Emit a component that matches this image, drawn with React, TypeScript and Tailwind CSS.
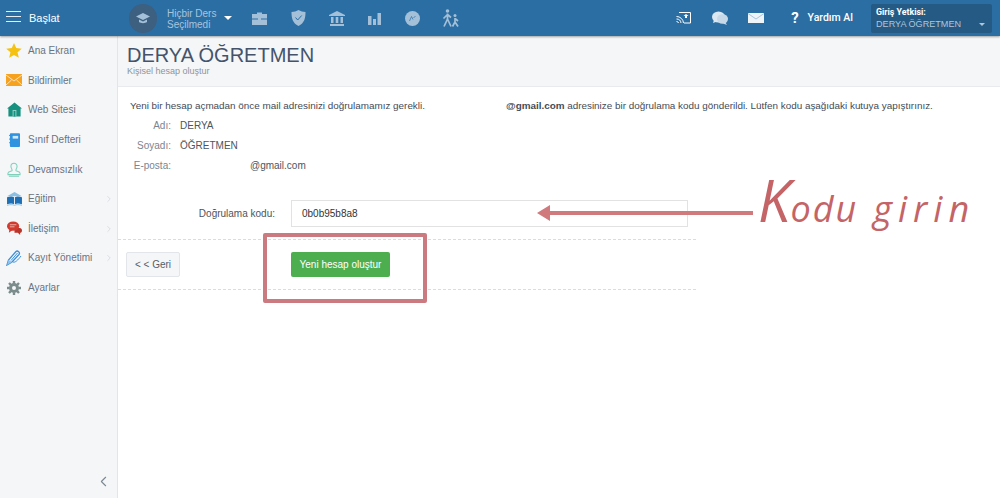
import React from "react";
import { ChevronRight, ChevronLeft } from "lucide-react";

const Star = () => (
  <svg width="16" height="15" viewBox="0 0 18 17"><path d="M9 0l2.500 5.800 6.300.6-4.800 4.200 1.500 6.200L9 13.500l-5.500 3.300L5 10.600.2 6.400l6.300-.6z" fill="#f5c211" /></svg>
);
const Mail = () => (
  <svg width="16" height="12" viewBox="0 0 16 12"><rect width="16" height="12" fill="#f7a21f" /><path d="M0 1l8 6 8-6M0 11l5.500-5M16 11l-5.500-5" stroke="#fff" strokeWidth=".7" fill="none" /></svg>
);
const Home = () => (
  <svg width="15" height="15" viewBox="0 0 16 15"><path d="M8 0l8 6.500h-1.500V15h-13V6.500H0z" fill="#16907f" /><rect x="6" y="8" width="4" height="7" fill="#9ed3ca" /><rect x="7" y="9" width="2" height="6" fill="#16907f" /></svg>
);
const NoteBook = () => (
  <svg width="11" height="14" viewBox="0 0 12 15"><rect x="1" width="11" height="15" rx="1" fill="#2f93df" /><rect x="0" y="2" width="2" height="1" fill="#2f93df" /><rect x="0" y="6" width="2" height="1" fill="#2f93df" /><rect x="0" y="10" width="2" height="1" fill="#2f93df" /><rect x="4" y="3" width="6" height="3" fill="#cfe8fb" /></svg>
);
const Stamp = () => (
  <svg width="14" height="15" viewBox="0 0 15 16" fill="none" stroke="#7fd0bb" strokeWidth="1.100"><path d="M5.500 9c0-1.500-1.300-2.500-1.300-4.500a3.300 3.300 0 016.600 0C10.800 6.500 9.500 7.500 9.500 9c0 1 4.500 1 4.500 3v1.500H1V12c0-2 4.500-2 4.500-3zM2 15.300h11" /></svg>
);
const Book = () => (
  <svg width="15" height="14" viewBox="0 0 16 15"><path d="M8 0l8 4.500H0z" fill="#8bbfe3" /><path d="M0 5.500c3-1 6-1 7.500 0V13C6 12 3 12 0 13zM16 5.500c-3-1-6-1-7.500 0V13c1.500-1 4.500-1 7.500 0z" fill="#1f6fb5" /><path d="M0 14.300c3-1 6-1 8 0 2-1 5-1 8 0" stroke="#8bbfe3" fill="none" /></svg>
);
const Chat = () => (
  <svg width="15" height="15" viewBox="0 0 16 15"><path d="M10 7h3.500c1.500 0 2.500 1 2.500 2.500S15 12 14 12v2.500L11.500 12H8V8z" fill="#b8352a" /><ellipse cx="6.500" cy="5" rx="6.500" ry="5" fill="#d13a2f" /><path d="M2.500 8l-.5 4 4-3z" fill="#d13a2f" /><path d="M3 3.500h7M3 5.700h5" stroke="#f3b5ae" /></svg>
);
const Pen = () => (
  <svg width="16" height="16" viewBox="0 0 16 16" fill="none"><path d="M1 15l1.500-5L10 1.500c1.500-1.500 4.500 1 3 3L6 12z" stroke="#3d8fd8" strokeWidth="1.300" /><path d="M5 10.500L11.500 3M7 12c2 1 5-2 8-6" stroke="#3d8fd8" /><path d="M1 15l1.500-5L6 12z" fill="#8cc2ee" /></svg>
);
const Gear = () => (
  <svg width="14" height="14" viewBox="0 0 14 14"><circle cx="7" cy="7" r="3.500" fill="none" stroke="#7b8c8c" strokeWidth="3" /><g stroke="#7b8c8c" strokeWidth="2.400"><path d="M7 0v2.500M7 11.500V14M0 7h2.500M11.500 7H14M2 2l1.800 1.800M10.200 10.200L12 12M12 2l-1.800 1.800M3.800 10.200L2 12" /></g></svg>
);

const items: { label: string; icon: React.ReactNode; arrow?: boolean }[] = [
  { label: "Ana Ekran", icon: <Star /> },
  { label: "Bildirimler", icon: <Mail /> },
  { label: "Web Sitesi", icon: <Home /> },
  { label: "Sınıf Defteri", icon: <NoteBook /> },
  { label: "Devamsızlık", icon: <Stamp /> },
  { label: "Eğitim", icon: <Book />, arrow: true },
  { label: "İletişim", icon: <Chat />, arrow: true },
  { label: "Kayıt Yönetimi", icon: <Pen />, arrow: true },
  { label: "Ayarlar", icon: <Gear /> },
];

const c = "#a3c0d8";

export default function App() {
  return (
    <div className="relative flex h-[498px] w-full flex-col overflow-hidden bg-white font-['Liberation_Sans',Arial,sans-serif]">
      <header className="z-10 flex h-9 shrink-0 items-center bg-[#2b6ea4] text-white shadow-[0_1px_2px_rgba(0,0,0,0.35)]">
        <div className="ml-[6px] -mt-[3px] flex w-[15px] flex-col gap-[3.500px]">
          <span className="h-[1.500px] bg-[#e6eef5]" /><span className="h-[1.500px] bg-[#e6eef5]" /><span className="h-[1.500px] bg-[#e6eef5]" />
        </div>
        <span className="ml-[8px] w-[100px] text-[11px]">Başlat</span>
        <div className="flex h-[29px] w-[28px] items-center justify-center rounded-full bg-[#3d5f80]">
          <svg width="14" height="11" viewBox="0 0 14 11"><path d="M7 0l7 3.500L7 7 0 3.500z" fill={c} /><path d="M3 6.500V9c2 1.500 6 1.500 8 0V6.500L7 8.500z" fill={c} /></svg>
        </div>
        <div className="ml-[10px] mt-[1px] w-[57px] text-[10px] leading-[11px] text-[#a8c4dc]">Hiçbir Ders<br />Seçilmedi</div>
        <span className="h-0 w-0 border-x-[4px] border-t-[4px] border-x-transparent border-t-white" />
        <div className="ml-[20px] flex items-center">
          <svg className="w-[15px]" height="13" viewBox="0 0 15 13"><path d="M5 2V.500h5V2h5v4.500H0V2zM0 7.500h15V13H0z" fill={c} /><rect x="6" y="6" width="3" height="2.500" fill={c} /></svg>
          <svg className="ml-[24px] w-[15px]" height="16" viewBox="0 0 15 16"><path d="M7.500 0c2 1.300 4.500 2 7 2 0 6-1 11-7 14C1.500 13 .5 8 .5 2c2.500 0 5-.7 7-2z" fill={c} /><path d="M4.500 7.500l2.200 2.500 4-4.500" stroke="#2b6ea4" fill="none" /></svg>
          <svg className="ml-[23px] w-[16px]" height="15" viewBox="0 0 16 15"><path d="M8 0l8 4v1H0V4zM2 6h2.500v6H2zM6.700 6h2.600v6H6.700zM11.500 6H14v6h-2.500zM1 13h14v2H1z" fill={c} /></svg>
          <svg className="ml-[23px] w-[13px]" height="13" viewBox="0 0 13 13"><path d="M0 4h3.500v9H0zM5 7h3v6H5zM9.500 1H13v12H9.500z" fill={c} /></svg>
          <svg className="ml-[24px] w-[15px]" height="15" viewBox="0 0 15 15"><circle cx="7.500" cy="7.500" r="7.500" fill={c} /><path d="M4.500 10l2-4.500 1.500 3M8.500 6.500l2-1" stroke="#2b6ea4" strokeWidth=".7" fill="none" /></svg>
          <svg className="ml-[22px] w-[17px]" height="18" viewBox="0 0 17 18" fill="none" stroke={c} strokeWidth="1.700"><circle cx="5.500" cy="2" r="1.800" fill={c} stroke="none" /><circle cx="13" cy="6.500" r="1.500" fill={c} stroke="none" /><path d="M5.500 4.500V10L2 17.500M5.500 10L9 17.500M5.500 5.500L1.500 9.500M5.500 5.500L9 8.500M13 9v4l-2.500 4.500M13 13l3 4.500M13 9.500l3 2.500" /></svg>
        </div>
        <div className="ml-auto flex items-center">
          <svg width="15" height="12" viewBox="0 0 15 12" fill="none" stroke="#fff"><path d="M3 .500h11.500v10.500H8" /><path d="M.5 4.500a7 7 0 017 6.500M.5 7a4.500 4.500 0 014.500 4M.5 9.500a2 2 0 012 1.500" /><path d="M10 2l-2.500 2h1.500v2h2V4h1.500z" fill="#fff" stroke="none" /></svg>
          <svg className="ml-[21px]" width="16" height="15" viewBox="0 0 16 15"><ellipse cx="6.500" cy="6" rx="6.500" ry="5.500" fill="#dbe8f2" /><path d="M2 9l-1 3 4-1.500z" fill="#dbe8f2" /><ellipse cx="10.500" cy="8" rx="5.500" ry="4.800" fill="#c7d9e8" /><path d="M13 11l2 3-4-1.500z" fill="#c7d9e8" /></svg>
          <svg className="ml-[20px]" width="16" height="10" viewBox="0 0 16 10"><rect width="16" height="10" fill="#eef4f8" /><path d="M0 .5l8 5.500 8-5.500" stroke="#8db2ce" strokeWidth=".7" fill="none" /></svg>
          <span className="ml-[27px] font-['Roboto',sans-serif] text-[15px] font-bold">?</span>
          <span className="ml-[9px] font-['Roboto',sans-serif] text-[10.500px] font-medium">Yardım Al</span>
          <div className="relative ml-[18px] mr-2 h-[29px] w-[121px] rounded-[2px] bg-[#255a84] pl-[5px] pt-[3px]">
            <div className="font-['Roboto',sans-serif] text-[8.800px] font-bold leading-[11px]">Giriş Yetkisi:</div>
            <div className="text-[9.100px] leading-[12px] text-[#aec6dc]">DERYA ÖĞRETMEN</div>
            <span className="absolute bottom-[7px] right-[7px] h-0 w-0 border-x-[3.500px] border-t-[3.500px] border-x-transparent border-t-[#aec6dc]" />
          </div>
        </div>
      </header>

      <div className="flex min-h-0 flex-1">
        <aside className="relative w-[118px] shrink-0 border-r border-[#e3e5e8] bg-[#f5f6f8]">
          {items.map((it) => (
            <div key={it.label} className="relative flex h-[29.600px] items-center text-[10px] text-[#6a7380]">
              <span className="flex w-[28px] shrink-0 justify-center">{it.icon}</span>
              <span>{it.label}</span>
              {it.arrow && <ChevronRight className="absolute left-[104px] top-[9px] h-[12px] w-[10px] text-[#c9ced3]" strokeWidth={1.500} />}
            </div>
          ))}
          <ChevronLeft className="absolute bottom-[8px] right-[5px] h-[17px] w-[17px] text-[#7d8791]" strokeWidth={1.500} />
        </aside>

        <main className="min-w-0 flex-1">
          <div className="h-[51px] border-b border-[#e8eaed] bg-[#f5f6f8] pl-[9px] pt-[8px]">
            <h1 className="text-[20px] leading-[22px] text-[#44536a]">DERYA ÖĞRETMEN</h1>
            <p className="text-[9px] leading-[10px] text-[#8b95a1]">Kişisel hesap oluştur</p>
          </div>

          <div className="w-[578px]">
            <div className="flex whitespace-nowrap pl-[12px] pt-[12px] text-[9.900px] leading-[13px] text-[#444b55]">
              <span className="w-[376px] shrink-0">Yeni bir hesap açmadan önce mail adresinizi doğrulamamız gerekli.</span>
              <span><b>@gmail.com</b> adresinize bir doğrulama kodu gönderildi. Lütfen kodu aşağıdaki kutuya yapıştırınız.</span>
            </div>

            <div className="mt-[4px] text-[10px]">
              {[["Adı:", "DERYA"], ["Soyadı:", "ÖĞRETMEN"]].map(([k, v]) => (
                <div key={k} className="flex h-[19.700px] items-center">
                  <span className="w-[53px] shrink-0 text-right text-[#7c858f]">{k}</span>
                  <span className="ml-[9px] text-[#4c5560]">{v}</span>
                </div>
              ))}
              <div className="flex h-[19.700px] items-center">
                <span className="w-[53px] shrink-0 text-right text-[#7c858f]">E-posta:</span>
                <span className="ml-[79px] text-[#4c5560]">@gmail.com</span>
              </div>
            </div>

            <div className="mt-[25px] flex items-center">
              <span className="w-[157px] shrink-0 text-right text-[10px] text-[#4c5560]">Doğrulama kodu:</span>
              <input readOnly value="0b0b95b8a8" className="ml-[16px] h-[27px] w-[397px] border border-[#e2e2e2] pl-[10px] text-[10px] text-[#333] outline-none" />
            </div>

            <div className="mt-[12px] flex h-[51px] items-center border-y border-dashed border-[#dcdcdc] pl-[8px]">
              <button className="h-[25px] w-[54px] rounded-[2px] border border-[#e2e5e9] bg-[#f5f6f8] text-[10px] text-[#555e69]">&lt; &lt; Geri</button>
              <button className="ml-[111px] h-[25px] w-[99px] rounded-[2px] bg-[#4cae4f] text-[10px] text-white">Yeni hesap oluştur</button>
            </div>
          </div>
        </main>
      </div>

      <div className="absolute left-[263px] top-[233px] h-[70px] w-[164px] rounded-[2px] border-[4px] border-[#cb7a7f]" />
      <div className="absolute left-[549px] top-[211px] h-[4px] w-[204px] bg-[#d17a7d]" />
      <div className="absolute left-[537px] top-[205px] h-0 w-0 border-y-[8px] border-r-[13px] border-y-transparent border-r-[#d17a7d]" />
      <div className="absolute left-[758px] top-[170px] flex items-baseline whitespace-nowrap font-['Open_Sans',sans-serif] font-normal italic text-[#c46467]">
        <span className="text-[58px] leading-[60px]">K</span>
        <span className="text-[36px] leading-[60px] tracking-[2px]">odu</span>
        <span className="ml-[15px] text-[36px] leading-[60px] tracking-[6px]">girin</span>
      </div>
    </div>
  );
}
